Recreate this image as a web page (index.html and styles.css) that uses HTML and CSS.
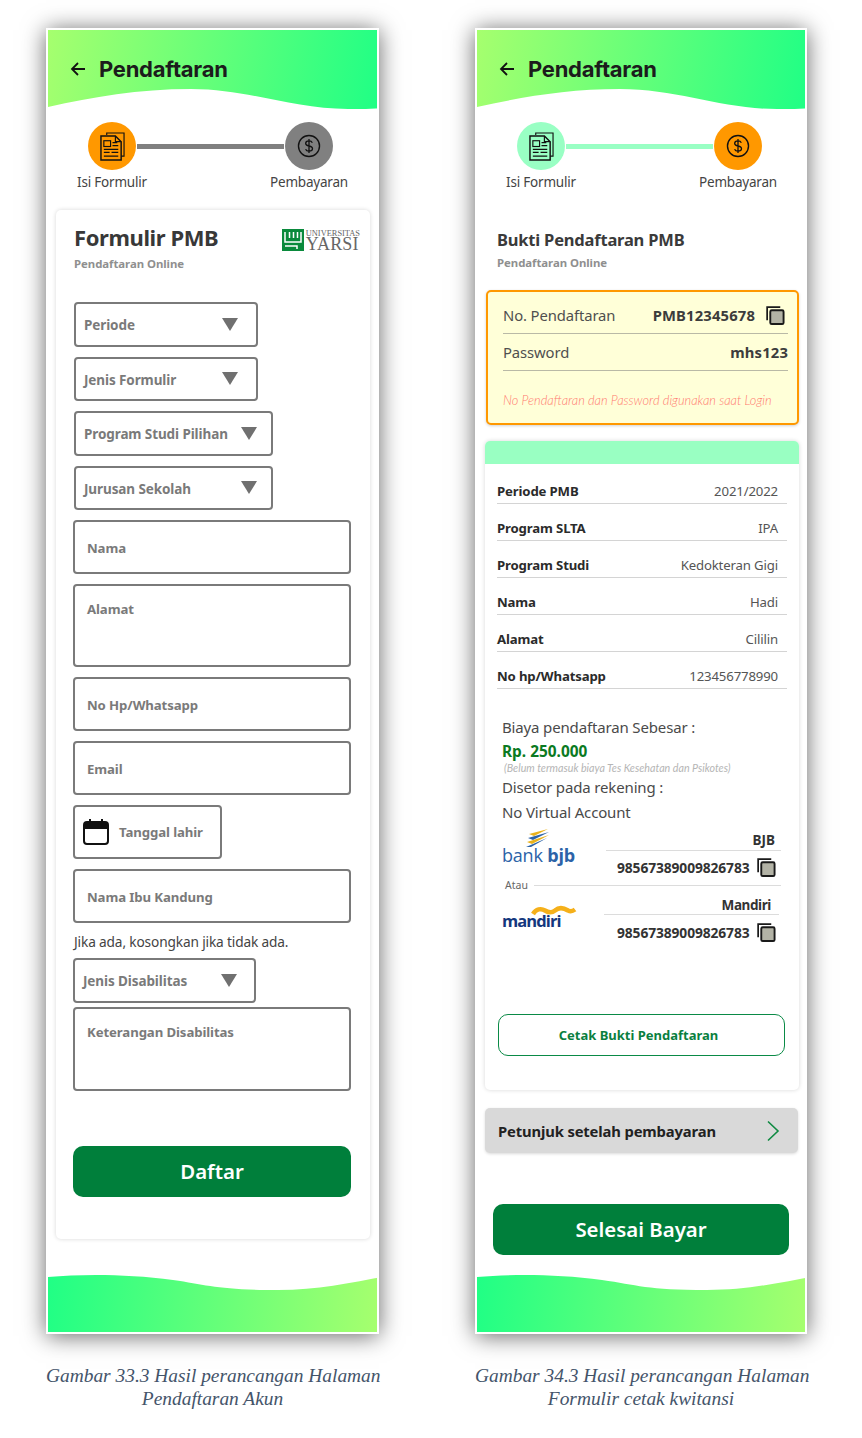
FILE: index.html
```html
<!DOCTYPE html>
<html lang="id">
<head>
    <meta charset="UTF-8">
    <title>Hasil perancangan Halaman</title>
    <link rel="stylesheet" href="styles.css">
</head>
<body>
    <svg class="icon-defs" width="0" height="0">
        <symbol id="ic-doc" viewBox="0 0 26 30">
            <path d="M7 3V1h18v24h-3" fill="none" stroke="currentColor" stroke-width="1.2"/>
            <path d="M1 4h15l6 6v19H1z" fill="none" stroke="currentColor" stroke-width="1.5"/>
            <path d="M16 4v6h6" fill="none" stroke="currentColor" stroke-width="1.2"/>
            <rect x="4" y="9" width="7" height="6" fill="none" stroke="currentColor" stroke-width="1.2"/>
            <path d="M13 11h5M13 14h6M4 18h15M4 21h6M12 21h7M4 25h15" fill="none" stroke="currentColor" stroke-width="1.3"/>
        </symbol>
        <symbol id="ic-dollar" viewBox="0 0 26 26">
            <circle cx="13" cy="13" r="11.4" fill="none" stroke="currentColor" stroke-width="1.5"/>
            <path d="M16.6 9.4c-.6-1.3-2-2-3.6-2-2 0-3.6 1-3.6 2.8 0 3.8 7.4 1.8 7.4 5.6 0 1.8-1.7 2.8-3.8 2.8-1.700 0-3.100-.7-3.700-2.100M13 5.500v15" fill="none" stroke="currentColor" stroke-width="1.400"/>
        </symbol>
        <symbol id="ic-copy" viewBox="0 0 20 20">
            <path d="M1.200 15V1.200H15" fill="none" stroke="#1a1a1a" stroke-width="1.800"/>
            <rect x="4.500" y="4.500" width="14" height="14.500" rx="1.500" fill="#b3b3a6" stroke="#1a1a1a" stroke-width="2"/>
        </symbol>
    </svg>

    <div class="page">
        <div class="column">
            <div class="phone">
                <header class="top-wave">
                    <svg class="back" width="16" height="16" viewBox="0 0 16 16"><path d="M15 8H2M8 2 2 8l6 6" fill="none" stroke="#111" stroke-width="1.800"/></svg>
                    <h1>Pendaftaran</h1>
                </header>
                <div class="steps">
                    <div class="track">
                        <div class="circle orange"><svg width="25" height="29"><use href="#ic-doc"/></svg></div>
                        <div class="line gray"></div>
                        <div class="circle gray"><svg width="24" height="24"><use href="#ic-dollar"/></svg></div>
                    </div>
                    <div class="labels"><span>Isi Formulir</span><span>Pembayaran</span></div>
                </div>

                <main class="form-card">
                    <div class="form-head">
                        <div>
                            <h2>Formulir PMB</h2>
                            <p class="sub">Pendaftaran Online</p>
                        </div>
                        <div class="yarsi">
                            <svg width="22" height="22" viewBox="0 0 22 22">
                                <rect width="22" height="22" fill="#0a8a3c"/>
                                <path d="M3 3v10h16V3M7.500 3v6M11.500 3v6M15.500 3v6M3 17h12v3" fill="none" stroke="#fff" stroke-width="1.500"/>
                            </svg>
                            <div class="yarsi-text"><small>UNIVERSITAS</small><b>YARSI</b></div>
                        </div>
                    </div>

                    <div class="fields">
                        <div class="field select w184">Periode<i class="tri"></i></div>
                        <div class="field select w184">Jenis Formulir<i class="tri"></i></div>
                        <div class="field select w199">Program Studi Pilihan<i class="tri"></i></div>
                        <div class="field select w199">Jurusan Sekolah<i class="tri"></i></div>
                        <div class="field input">Nama</div>
                        <div class="field input area">Alamat</div>
                        <div class="field input">No Hp/Whatsapp</div>
                        <div class="field input">Email</div>
                        <div class="field input date">
                            <svg width="28" height="28" viewBox="0 0 28 28">
                                <path d="M2 7a3 3 0 0 1 3-3h18a3 3 0 0 1 3 3v4H2z" fill="#111"/>
                                <path d="M8 1v5M20 1v5" stroke="#111" stroke-width="2"/>
                                <rect x="2" y="4" width="24" height="22" rx="3" fill="none" stroke="#111" stroke-width="2"/>
                            </svg>
                            Tanggal lahir
                        </div>
                        <div class="field input">Nama Ibu Kandung</div>
                        <p class="hint">Jika ada, kosongkan jika tidak ada.</p>
                        <div class="field select w183">Jenis Disabilitas<i class="tri"></i></div>
                        <div class="field input area ket">Keterangan Disabilitas</div>
                    </div>
                    <button class="btn daftar">Daftar</button>
                </main>

                <footer class="bottom-wave"></footer>
            </div>
            <p class="caption">Gambar 33.3 Hasil perancangan Halaman<br>Pendaftaran Akun</p>
        </div>

        <div class="column narrow">
            <div class="phone">
                <header class="top-wave">
                    <svg class="back" width="16" height="16" viewBox="0 0 16 16"><path d="M15 8H2M8 2 2 8l6 6" fill="none" stroke="#111" stroke-width="1.800"/></svg>
                    <h1>Pendaftaran</h1>
                </header>
                <div class="steps">
                    <div class="track">
                        <div class="circle mint"><svg width="25" height="29"><use href="#ic-doc"/></svg></div>
                        <div class="line mint"></div>
                        <div class="circle orange"><svg width="24" height="24"><use href="#ic-dollar"/></svg></div>
                    </div>
                    <div class="labels"><span>Isi Formulir</span><span>Pembayaran</span></div>
                </div>

                <main class="receipt">
                    <div class="receipt-head">
                        <h2>Bukti Pendaftaran PMB</h2>
                        <p class="sub">Pendaftaran Online</p>
                    </div>

                    <section class="login-box">
                        <div class="login-row">
                            <span>No. Pendaftaran</span>
                            <b>PMB12345678</b>
                            <svg class="copy" width="19" height="19"><use href="#ic-copy"/></svg>
                        </div>
                        <div class="login-row">
                            <span>Password</span>
                            <b>mhs123</b>
                        </div>
                        <p class="login-note">No Pendaftaran dan Password digunakan saat Login</p>
                    </section>

                    <section class="detail-card">
                        <div class="detail-bar"></div>
                        <div class="detail-rows">
                            <div class="detail-row"><b>Periode PMB</b><span>2021/2022</span></div>
                            <div class="detail-row"><b>Program SLTA</b><span>IPA</span></div>
                            <div class="detail-row"><b>Program Studi</b><span>Kedokteran Gigi</span></div>
                            <div class="detail-row"><b>Nama</b><span>Hadi</span></div>
                            <div class="detail-row"><b>Alamat</b><span>Cililin</span></div>
                            <div class="detail-row"><b>No hp/Whatsapp</b><span>123456778990</span></div>
                        </div>

                        <div class="pay">
                            <p class="pay-text">Biaya pendaftaran Sebesar :</p>
                            <p class="pay-price">Rp. 250.000</p>
                            <p class="pay-small">(Belum termasuk biaya Tes Kesehatan dan Psikotes)</p>
                            <p class="pay-text">Disetor pada rekening :</p>
                            <p class="pay-text va">No Virtual Account</p>
                        </div>

                        <div class="bank">
                            <div class="bank-logo bjb">
                                <svg width="24" height="18" viewBox="0 0 24 18">
                                    <path d="M3 5 22 0 8 7z" fill="#e9b21c"/>
                                    <path d="M2 9 23 3 7 11z" fill="#2c63a8"/>
                                    <path d="M1 13 23 6 6 15z" fill="#e9b21c"/>
                                    <path d="M0 18 21 9 5 18z" fill="#2c63a8"/>
                                </svg>
                                <span>bank <b>bjb</b></span>
                            </div>
                            <div class="bank-info">
                                <div class="bank-name">BJB</div>
                                <div class="bank-no">98567389009826783<svg width="19" height="19"><use href="#ic-copy"/></svg></div>
                            </div>
                        </div>
                        <div class="or"><span>Atau</span></div>
                        <div class="bank second">
                            <div class="bank-logo mandiri">
                                <svg width="46" height="12" viewBox="0 0 46 12">
                                    <path d="M2 9C5 4 10 3 14 5.500C18 8 21 8 24 5.500C28 2 33 3 37 5.500C40 7 42 6 44 4.500" fill="none" stroke="#f5b01a" stroke-width="4.500"/>
                                </svg>
                                <span>mandiri</span>
                            </div>
                            <div class="bank-info">
                                <div class="bank-name">Mandiri</div>
                                <div class="bank-no">98567389009826783<svg width="19" height="19"><use href="#ic-copy"/></svg></div>
                            </div>
                        </div>

                        <button class="btn-outline">Cetak Bukti Pendaftaran</button>
                    </section>

                    <div class="guide">
                        <span>Petunjuk setelah pembayaran</span>
                        <svg width="14" height="22" viewBox="0 0 14 22"><path d="M2 1.500 12 11 2 20.500" fill="none" stroke="#0f8a42" stroke-width="1.600"/></svg>
                    </div>

                    <button class="btn selesai">Selesai Bayar</button>
                </main>

                <footer class="bottom-wave"></footer>
            </div>
            <p class="caption">Gambar 34.3 Hasil perancangan Halaman<br>Formulir cetak kwitansi</p>
        </div>
    </div>
</body>
</html>
```

FILE: styles.css
```css
* {
    box-sizing: border-box;
}

body {
    margin: 0;
    background-color: white;
    color: #3a3a3a;
    font-family: "Noto Sans", sans-serif;
}

p, h1, h2 {
    margin: 0;
}

.icon-defs {
    display: block;
    height: 0;
}

.page {
    display: flex;
    gap: 96px;
    padding: 28px 0 0 46px;
}

.column {
    width: 333px;
}

.column.narrow {
    width: 332px;
}

.phone {
    display: flex;
    flex-direction: column;
    height: 1306px;
    background-color: white;
    border: 2px solid white;
    box-shadow: 0 2px 22px rgba(0, 0, 0, 0.6);
}

.top-wave {
    display: flex;
    align-items: flex-start;
    gap: 13px;
    height: 80px;
    padding: 24px 0 0 22px;
    background: linear-gradient(100deg, #a6ff6e, #20ff85);
    clip-path: path("M0 77C45 67 90 59 143 59C200 59 245 79 300 79C312 79 322 79 340 78V0H0Z");
}

.top-wave h1 {
    font-family: Inter, sans-serif;
    font-size: 22px;
    font-weight: 700;
    line-height: 30px;
    letter-spacing: -0.25px;
    color: #1c1c1c;
}

.back {
    margin-top: 7px;
}

.steps {
    width: 320px;
    height: 100px;
    padding-top: 12px;
}

.track {
    display: flex;
    align-items: center;
    gap: 1px;
    padding: 0 35px 0 40px;
}

.circle {
    display: flex;
    align-items: center;
    justify-content: center;
    flex: none;
    width: 48px;
    height: 48px;
    border-radius: 50%;
    color: #111;
}

.circle.orange {
    background-color: #ff9800;
}

.circle.gray {
    background-color: #808080;
}

.circle.mint {
    background-color: #99ffc4;
}

.line {
    flex: 1;
    height: 5px;
}

.line.gray {
    background-color: #808080;
}

.line.mint {
    background-color: #99ffc4;
}

.labels {
    display: flex;
    justify-content: space-between;
    padding: 2px 9px 0 14px;
}

.labels span {
    width: 100px;
    text-align: center;
    font-size: 13.5px;
    line-height: 20px;
    letter-spacing: -0.2px;
    color: #444;
}

/* halaman kiri */
.form-card {
    width: 314px;
    height: 1029px;
    margin-left: 8px;
    padding: 0 18px;
    border-radius: 5px;
    box-shadow: 0 0 4px rgba(0, 0, 0, 0.16);
}

.form-head {
    display: flex;
    justify-content: space-between;
    height: 92px;
    padding: 11px 0 0 0;
}

.form-head h2 {
    font-size: 22px;
    line-height: 32px;
    font-weight: 700;
    letter-spacing: -0.4px;
    color: #383838;
}

.sub {
    font-size: 11.4px;
    font-weight: 700;
    line-height: 16px;
    letter-spacing: -0.05px;
    color: #8f8f8f;
}

.form-head .sub {
    margin-top: 3px;
}

.yarsi {
    display: flex;
    gap: 2px;
    margin: 8px -8px 0 0;
}

.yarsi-text {
    display: flex;
    flex-direction: column;
    font-family: "Liberation Serif", serif;
    color: #666;
}

.yarsi-text small {
    font-size: 8.4px;
    line-height: 9px;
}

.yarsi-text b {
    font-size: 18px;
    font-weight: 400;
    line-height: 13px;
    letter-spacing: 0.2px;
}

.fields {
    display: flex;
    flex-direction: column;
    gap: 10px;
}

.field {
    display: flex;
    align-items: center;
    border: 2px solid #7a7a7a;
    border-radius: 4px;
    font-size: 13.2px;
    font-weight: 700;
    letter-spacing: -0.1px;
    color: #7a7a7a;
}

.select {
    justify-content: space-between;
    height: 44.5px;
    padding: 2px 18px 0 8px;
    font-size: 13.5px;
}

.w184 {
    width: 184px;
}

.w199 {
    width: 199px;
    padding-right: 14px;
}

.w183 {
    width: 183px;
    margin-left: -1px;
    padding-right: 17px;
}

.tri {
    width: 0;
    height: 0;
    margin-top: -2px;
    border-left: 8px solid transparent;
    border-right: 8px solid transparent;
    border-top: 13px solid #707070;
}

.input {
    width: 278px;
    height: 54px;
    padding: 2px 0 0 12px;
    margin-left: -1px;
}

.area {
    align-items: flex-start;
    height: 83px;
    padding-top: 14px;
}

.area.ket {
    margin-top: -5.5px;
    height: 84px;
    padding-top: 14px;
}

.date {
    gap: 9px;
    width: 149px;
    padding: 0 0 0 7px;
}

.hint {
    height: 15px;
    font-size: 13.7px;
    line-height: 18px;
    letter-spacing: -0.15px;
    color: #444;
}

.btn {
    display: block;
    padding: 0 0 2px;
    border: none;
    border-radius: 10px;
    background-color: #007f3b;
    color: white;
    font-family: "Noto Sans", sans-serif;
    font-weight: 600;
    font-size: 20.4px;
}

.daftar {
    width: 278px;
    height: 51px;
    margin: 55px 0 0 -1px;
}

.bottom-wave {
    height: 57px;
    margin-top: auto;
    background: linear-gradient(95deg, #20ff85, #a6ff6e);
    clip-path: path("M0 2C35 -1 80 -1 125 5C160 10 170 15 230 15C270 15 300 8 340 1V60H0Z");
}

.caption {
    margin-top: 30px;
    text-align: center;
    font-family: "Liberation Serif", serif;
    font-style: italic;
    font-size: 19.4px;
    line-height: 23px;
    color: #44546a;
    white-space: nowrap;
}

/* halaman kanan */
.receipt {
    display: flex;
    flex-direction: column;
}

.receipt-head {
    height: 80px;
    padding: 18px 0 0 20px;
}

.receipt-head h2 {
    font-size: 16.5px;
    line-height: 24px;
    font-weight: 700;
    letter-spacing: -0.2px;
    color: #3a3a3a;
}

.receipt-head .sub {
    margin-top: 3px;
}

.login-box {
    width: 313px;
    height: 135px;
    margin-left: 9px;
    padding: 4px 9px 0 15px;
    background-color: #ffffd8;
    border: 2px solid #ff9800;
    border-radius: 5px;
    box-shadow: 0 1px 3px rgba(0, 0, 0, 0.18);
}

.login-row {
    display: flex;
    align-items: center;
    height: 38px;
    border-bottom: 1px solid #b9b9a6;
    font-size: 14.8px;
    letter-spacing: -0.1px;
    color: #4f4f4f;
}

.login-row:nth-child(2) {
    height: 37px;
}

.login-row b {
    margin-left: auto;
    letter-spacing: 0.15px;
    color: #3c3c3c;
}

.copy {
    margin: 2px 3px 0 11px;
}

.login-note {
    margin-top: 21px;
    font-family: Lato, sans-serif;
    font-style: italic;
    font-weight: 300;
    font-size: 12.8px;
    line-height: 16px;
    color: #ff7a70;
}

.detail-card {
    display: flex;
    flex-direction: column;
    width: 314px;
    height: 649px;
    margin: 16px 0 0 8px;
    border-radius: 5px;
    box-shadow: 0 0 4px rgba(0, 0, 0, 0.16);
}

.detail-bar {
    height: 23px;
    background-color: #99ffc2;
    border-radius: 5px 5px 0 0;
}

.detail-rows {
    padding: 3px 12px 0 12px;
}

.detail-row {
    display: flex;
    align-items: flex-end;
    justify-content: space-between;
    height: 37px;
    padding: 0 9px 3px 0;
    border-bottom: 1px solid #d4d4d4;
    font-size: 13.2px;
    line-height: 18px;
    letter-spacing: -0.15px;
}

.detail-row b {
    color: #2b2b2b;
}

.detail-row span {
    color: #555;
}

.pay {
    margin: 28px 0 0 17px;
}

.pay-text {
    font-size: 15px;
    line-height: 20px;
    letter-spacing: -0.15px;
    color: #4a4a4a;
}

.pay-price {
    margin-top: 5px;
    font-size: 15.4px;
    font-weight: 700;
    line-height: 20px;
    color: #0b7a22;
}

.pay-small {
    margin: -1px 0 2px 2px;
    font-family: Lato, sans-serif;
    font-style: italic;
    font-size: 10.7px;
    line-height: 14px;
    color: #b5b5b5;
}

.pay-text.va {
    margin-top: 5px;
}

.bank {
    display: flex;
    align-items: flex-start;
    height: 46px;
    margin: 7px 0 0 17px;
}

.bank.second {
    margin-top: 3px;
    height: 42px;
}

.bank-logo {
    display: flex;
    flex-direction: column;
    flex: none;
    width: 104px;
    font-family: "Open Sans", sans-serif;
}

.bjb svg {
    margin-left: 24px;
}

.bjb span {
    margin-top: -2px;
    font-size: 18px;
    line-height: 20px;
    letter-spacing: -0.2px;
    color: #2c63a8;
}

.mandiri {
    padding-top: 9px;
    width: 102px;
}

.mandiri svg {
    margin-left: 29px;
}

.mandiri span {
    margin-top: -5px;
    font-size: 16.5px;
    font-weight: 700;
    line-height: 18px;
    letter-spacing: -0.9px;
    color: #14377d;
}

.bank-info {
    width: 175px;
}

.bank-name {
    height: 22px;
    padding: 2px 6px 0 0;
    border-bottom: 1px solid #dcdcdc;
    text-align: right;
    font-size: 13.5px;
    font-weight: 700;
    line-height: 18px;
    color: #333;
}

.bank-no {
    display: flex;
    align-items: center;
    gap: 8px;
    height: 33px;
    padding-left: 11px;
    font-size: 13.8px;
    font-weight: 700;
    letter-spacing: -0.1px;
    color: #333;
}

.second .bank-name {
    height: 19px;
    padding: 0 8px 0 0;
    letter-spacing: -0.4px;
}

.second .bank-no {
    height: 34px;
    padding-left: 13px;
}

.or {
    display: flex;
    align-items: center;
    gap: 6px;
    height: 16px;
    margin: 2px 18px 0 20px;
    font-size: 10.5px;
    color: #666;
}

.or::after {
    content: "";
    flex: 1;
    border-top: 1px solid #dcdcdc;
}

.btn-outline {
    width: 287px;
    height: 42px;
    margin: 76px 0 0 13px;
    padding: 0 6px 0 0;
    background-color: white;
    border: 1px solid #0a8a46;
    border-radius: 10px;
    color: #0a7f3f;
    font-family: "Noto Sans", sans-serif;
    font-size: 13px;
    font-weight: 700;
}

.guide {
    display: flex;
    align-items: center;
    justify-content: space-between;
    width: 313px;
    height: 45px;
    margin: 18px 0 0 8px;
    padding: 0 18px 0 13px;
    background-color: #d9d9d9;
    border-radius: 5px;
    box-shadow: 0 1px 3px rgba(0, 0, 0, 0.15);
    font-size: 14.8px;
    font-weight: 700;
    letter-spacing: -0.15px;
    color: #222;
}

.selesai {
    width: 296px;
    height: 51px;
    margin: 51px 0 0 16px;
}
```
